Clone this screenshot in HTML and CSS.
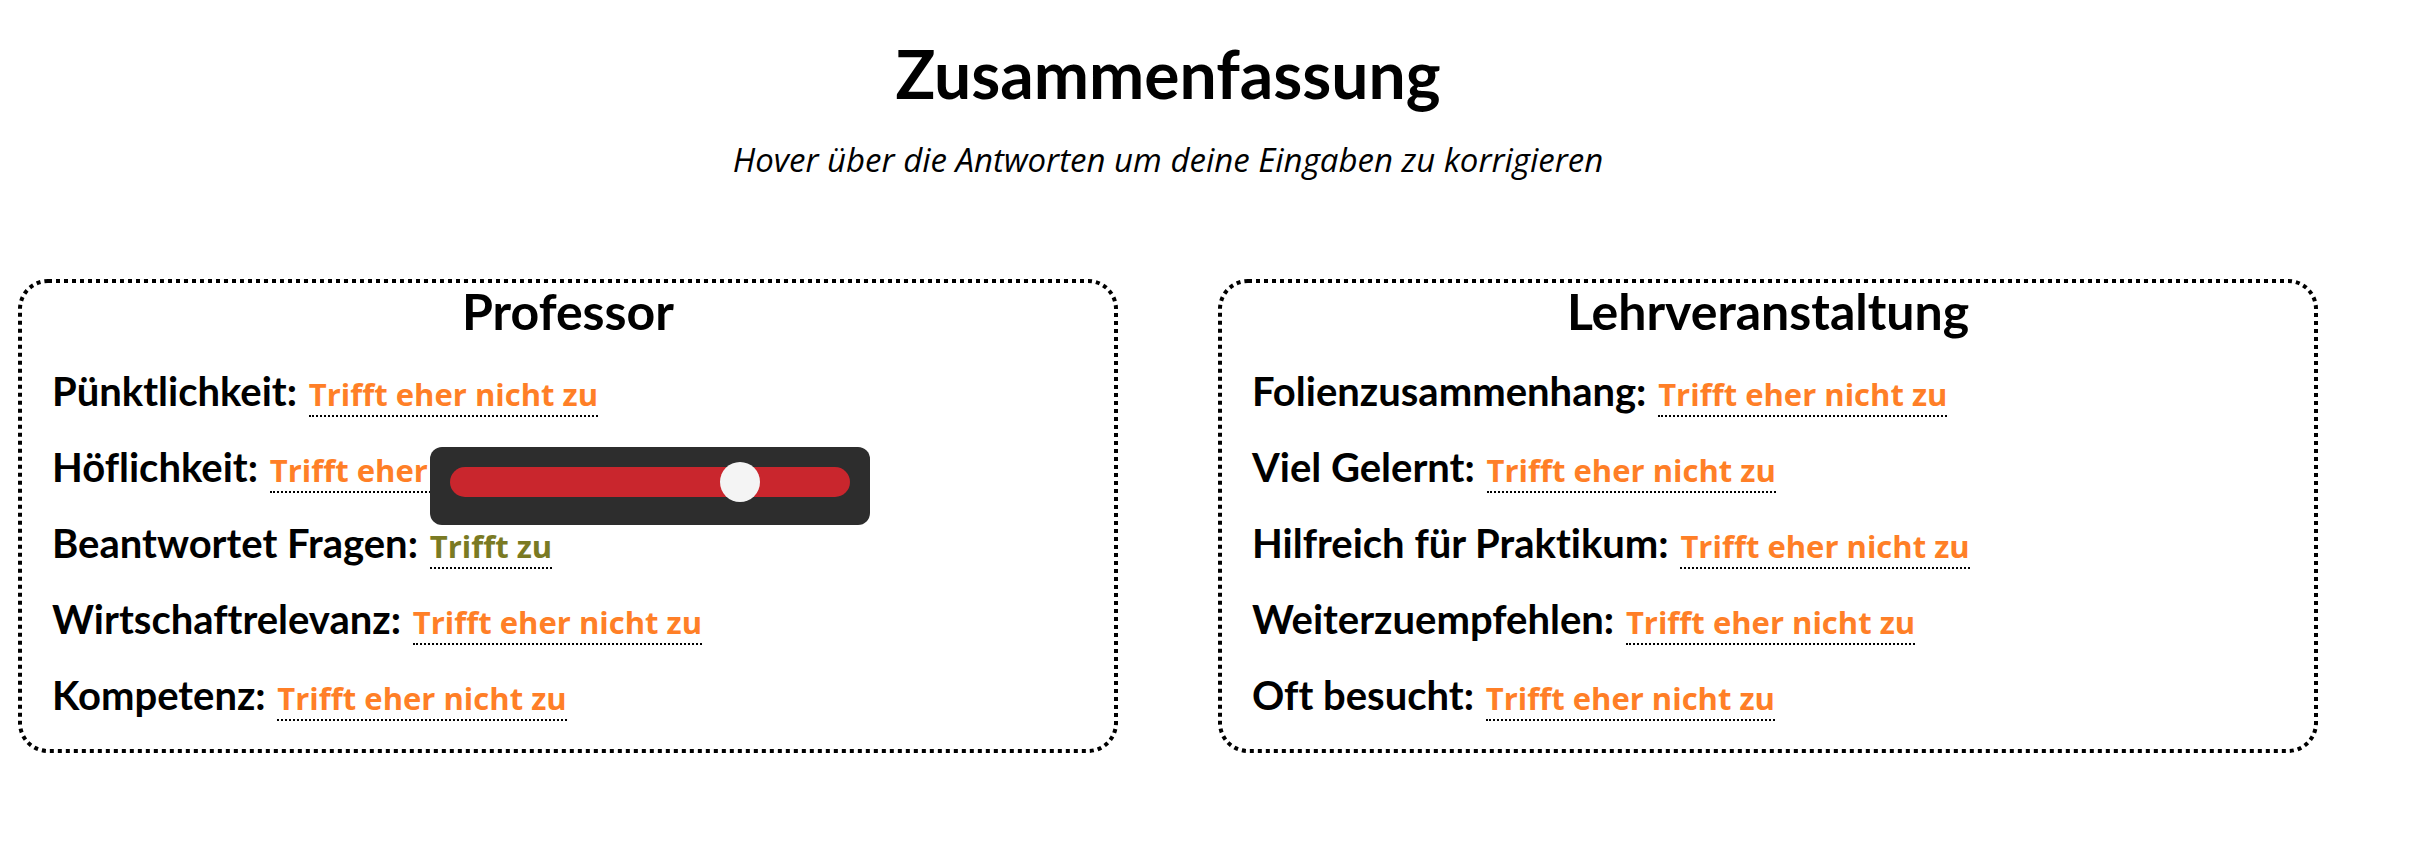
FILE: index.html
```html
<!DOCTYPE html>
<html lang="de">
<head>
<meta charset="utf-8">
<meta name="viewport" content="width=device-width, initial-scale=1">
<title>Zusammenfassung</title>
<link rel="stylesheet" href="styles.css">
</head>
<body>
<main class="summary">
  <header class="intro">
    <h1 class="title">Zusammenfassung</h1>
    <p class="hint">Hover über die Antworten um deine Eingaben zu korrigieren</p>
  </header>
  <div class="cards">
    <section class="card">
      <svg class="frame" aria-hidden="true"><rect class="frame-line" x="2" y="2" rx="28"/></svg>
      <h2 class="card-title">Professor</h2>
      <ul class="answers">
        <li>Pünktlichkeit: <span class="answer">Trifft eher nicht zu</span></li>
        <li>Höflichkeit: <span class="answer">Trifft eher nicht zu</span></li>
        <li><label for="fragen">Beantwortet Fragen:</label> <span class="answer agree">Trifft zu<span class="tooltip"><input class="slider" id="fragen" type="range" min="1" max="5" value="4"></span></span></li>
        <li>Wirtschaftrelevanz: <span class="answer">Trifft eher nicht zu</span></li>
        <li>Kompetenz: <span class="answer">Trifft eher nicht zu</span></li>
      </ul>
    </section>
    <section class="card">
      <svg class="frame" aria-hidden="true"><rect class="frame-line" x="2" y="2" rx="28"/></svg>
      <h2 class="card-title">Lehrveranstaltung</h2>
      <ul class="answers">
        <li>Folienzusammenhang: <span class="answer">Trifft eher nicht zu</span></li>
        <li>Viel Gelernt: <span class="answer">Trifft eher nicht zu</span></li>
        <li>Hilfreich für Praktikum: <span class="answer">Trifft eher nicht zu</span></li>
        <li>Weiterzuempfehlen: <span class="answer">Trifft eher nicht zu</span></li>
        <li>Oft besucht: <span class="answer">Trifft eher nicht zu</span></li>
      </ul>
    </section>
  </div>
</main>
</body>
</html>
```
FILE: styles.css
```css
* {
  box-sizing: border-box;
}

body {
  margin: 0;
  background: #fff;
  color: #000;
  font-family: "Trebuchet MS", Lato, sans-serif;
  font-variant-ligatures: none;
}

.summary {
  padding: 34px 104px 34px 18px;
}

.intro {
  margin-bottom: 97px;
  text-align: center;
}

.title {
  margin: 0 0 24px;
  font-size: 66px;
  line-height: 80px;
}

.hint {
  margin: 0;
  font-family: "Trebuchet MS", "Open Sans", sans-serif;
  font-size: 33px;
  font-style: italic;
  line-height: 44px;
}

.cards {
  display: grid;
  grid-template-columns: 1fr 1fr;
  gap: 100px;
}

.card {
  position: relative;
  padding: 6px 34px 20px;
}

/* Frame of square dots */
.frame {
  position: absolute;
  inset: 0;
  width: 100%;
  height: 100%;
  pointer-events: none;
}

.frame-line {
  width: calc(100% - 4px);
  height: calc(100% - 4px);
  fill: none;
  stroke: #000;
  stroke-width: 4px;
  stroke-dasharray: 4 4;
}

.card-title {
  margin: 0 0 16px;
  font-size: 50px;
  line-height: 52px;
  text-align: center;
}

.answers {
  margin: 0;
  padding: 0;
  list-style: none;
  font-size: 40px;
  font-weight: 700;
  line-height: 76px;
}

.answer {
  position: relative;
  margin-left: 2px;
  border-bottom: 2px dotted #000;
  color: #ff7f27;
  font-family: "Trebuchet MS", "Open Sans", sans-serif;
  font-size: 31px;
  line-height: 1;
}

.agree {
  color: #7a7a23;
}

.tooltip {
  position: absolute;
  bottom: 100%;
  left: 0;
  z-index: 1;
  display: flex;
  width: 440px;
  padding: 20px 20px 28px;
  border-radius: 12px;
  background: #2d2d2d;
}

.slider {
  width: 100%;
  height: 30px;
  margin: 0;
  border-radius: 15px;
  background: #c9262d;
  appearance: none;
}

.slider::-webkit-slider-thumb {
  width: 40px;
  height: 40px;
  border-radius: 50%;
  background: #f4f4f4;
  appearance: none;
}
```
